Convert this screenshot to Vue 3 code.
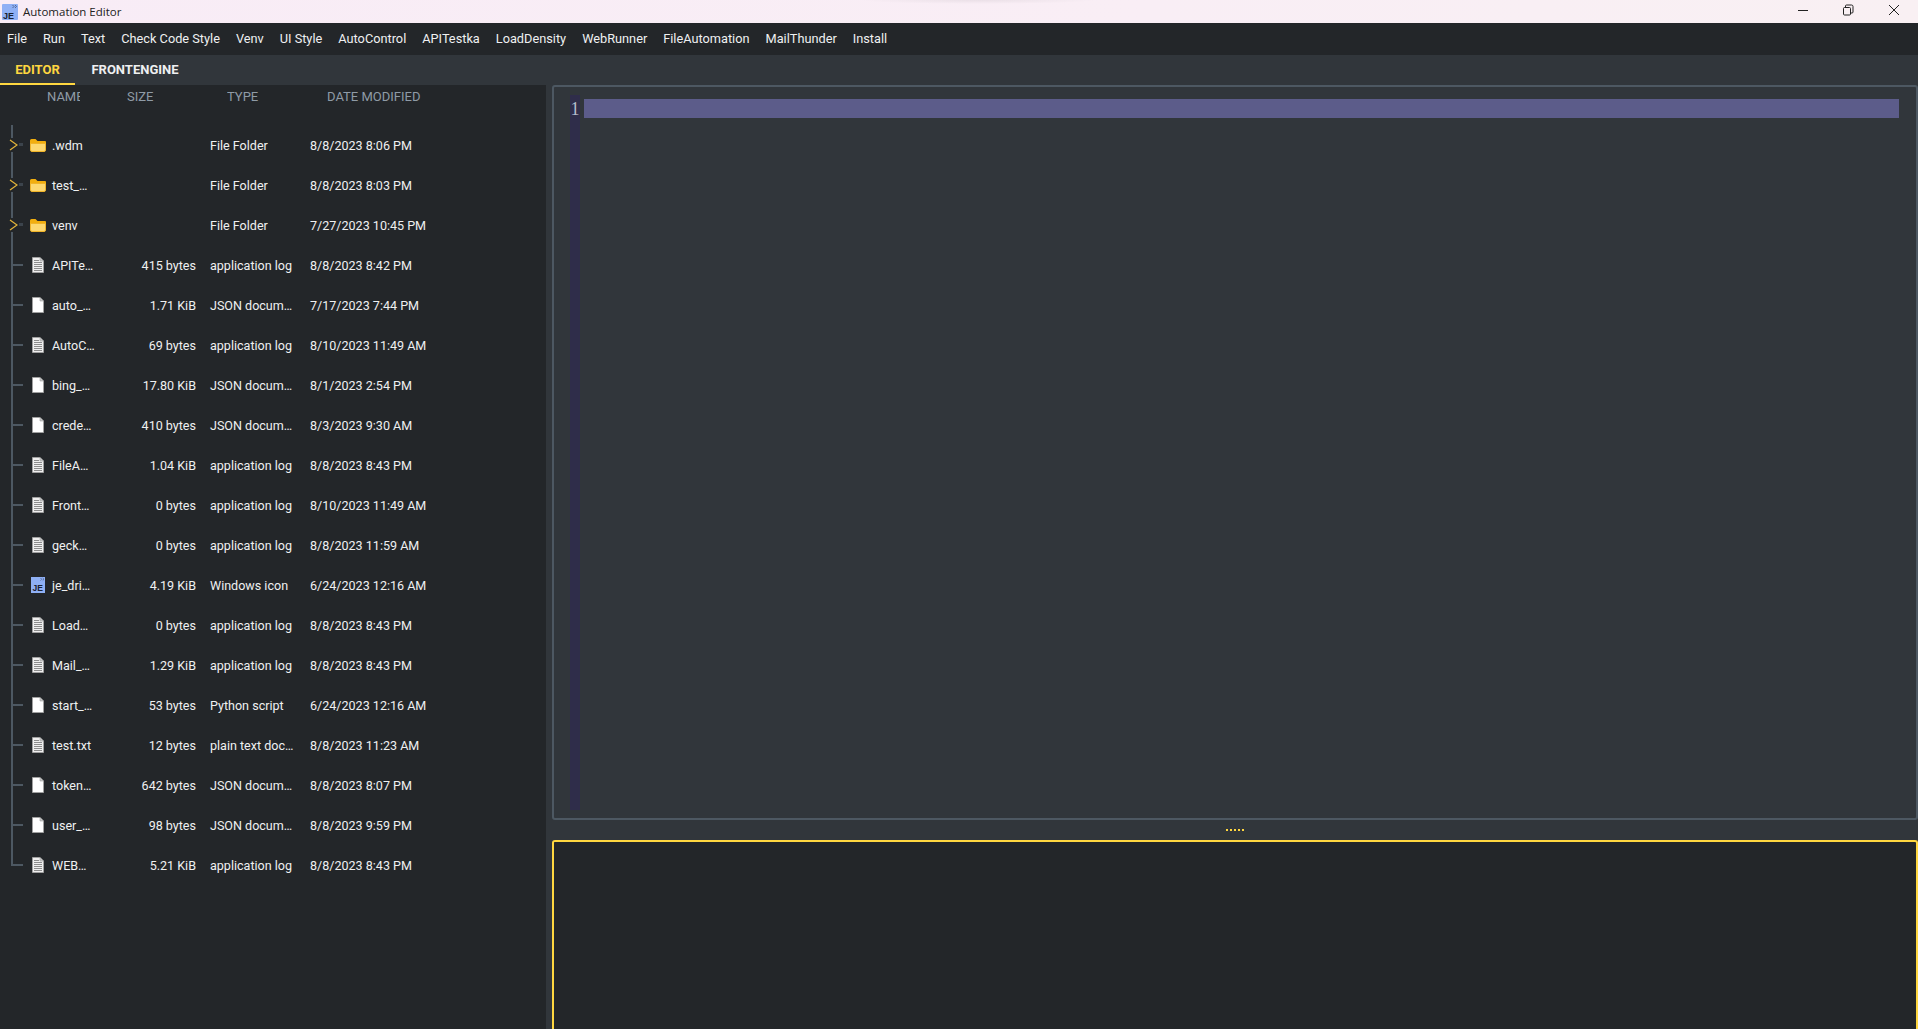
<script setup>
const menus = ['File', 'Run', 'Text', 'Check Code Style', 'Venv', 'UI Style', 'AutoControl', 'APITestka', 'LoadDensity', 'WebRunner', 'FileAutomation', 'MailThunder', 'Install'];

const columns = ['NAME', 'SIZE', 'TYPE', 'DATE MODIFIED'];

const files = [
  { name: '.wdm', size: '', type: 'File Folder', date: '8/8/2023 8:06 PM', icon: 'folder' },
  { name: 'test_…', size: '', type: 'File Folder', date: '8/8/2023 8:03 PM', icon: 'folder' },
  { name: 'venv', size: '', type: 'File Folder', date: '7/27/2023 10:45 PM', icon: 'folder' },
  { name: 'APITe…', size: '415 bytes', type: 'application log', date: '8/8/2023 8:42 PM', icon: 'text' },
  { name: 'auto_…', size: '1.71 KiB', type: 'JSON docum…', date: '7/17/2023 7:44 PM', icon: 'blank' },
  { name: 'AutoC…', size: '69 bytes', type: 'application log', date: '8/10/2023 11:49 AM', icon: 'text' },
  { name: 'bing_…', size: '17.80 KiB', type: 'JSON docum…', date: '8/1/2023 2:54 PM', icon: 'blank' },
  { name: 'crede…', size: '410 bytes', type: 'JSON docum…', date: '8/3/2023 9:30 AM', icon: 'blank' },
  { name: 'FileA…', size: '1.04 KiB', type: 'application log', date: '8/8/2023 8:43 PM', icon: 'text' },
  { name: 'Front…', size: '0 bytes', type: 'application log', date: '8/10/2023 11:49 AM', icon: 'text' },
  { name: 'geck…', size: '0 bytes', type: 'application log', date: '8/8/2023 11:59 AM', icon: 'text' },
  { name: 'je_dri…', size: '4.19 KiB', type: 'Windows icon', date: '6/24/2023 12:16 AM', icon: 'je' },
  { name: 'Load…', size: '0 bytes', type: 'application log', date: '8/8/2023 8:43 PM', icon: 'text' },
  { name: 'Mail_…', size: '1.29 KiB', type: 'application log', date: '8/8/2023 8:43 PM', icon: 'text' },
  { name: 'start_…', size: '53 bytes', type: 'Python script', date: '6/24/2023 12:16 AM', icon: 'blank' },
  { name: 'test.txt', size: '12 bytes', type: 'plain text doc…', date: '8/8/2023 11:23 AM', icon: 'text' },
  { name: 'token…', size: '642 bytes', type: 'JSON docum…', date: '8/8/2023 8:07 PM', icon: 'blank' },
  { name: 'user_…', size: '98 bytes', type: 'JSON docum…', date: '8/8/2023 9:59 PM', icon: 'blank' },
  { name: 'WEB…', size: '5.21 KiB', type: 'application log', date: '8/8/2023 8:43 PM', icon: 'text' }
];
</script>

<template>
  <div class="window">
    <header class="titlebar">
      <svg class="app-icon" viewBox="0 0 16 16" width="16" height="16">
        <rect x="0" y="0" width="16" height="16" rx="1" fill="#8fb0f5" />
        <path d="M10.5 1l1.5 1.5L10.5 4M13 1l1.5 1.5L13 4" stroke="#3c4a6e" stroke-width="0.7" fill="none" />
        <text x="1" y="14.5" class="je-text">JE</text>
      </svg>
      <span class="title-text">Automation Editor</span>
      <div class="win-controls">
        <svg viewBox="0 0 12 12" width="12" height="12"><path d="M2 6.5h10" stroke="#222" stroke-width="1" fill="none" /></svg>
        <svg viewBox="0 0 12 12" width="12" height="12"><rect x="1.5" y="3.5" width="7" height="7.5" rx="1" stroke="#222" fill="none" /><path d="M3.5 3.5V2a1 1 0 0 1 1-1h5A1.5 1.5 0 0 1 11 2.5V8a1 1 0 0 1-1 1H8.5" stroke="#222" fill="none" /></svg>
        <svg viewBox="0 0 12 12" width="12" height="12"><path d="M1 1l10 10M11 1L1 11" stroke="#222" stroke-width="1" fill="none" /></svg>
      </div>
    </header>

    <nav class="menubar">
      <span v-for="m in menus" :key="m" class="menu-item">{{ m }}</span>
    </nav>

    <div class="tabbar">
      <span class="tab active">EDITOR</span>
      <span class="tab">FRONTENGINE</span>
    </div>

    <main class="workspace">
      <section class="tree-panel">
        <div class="tree-head">
          <span v-for="c in columns" :key="c" class="head-cell">{{ c }}</span>
        </div>
        <div class="tree-body">
          <div
            v-for="(f, i) in files"
            :key="f.name"
            class="tree-row"
            :class="{ last: i === files.length - 1, branch: f.icon === 'folder' }"
          >
            <span class="guide">
              <svg v-if="f.icon === 'folder'" class="chevron" viewBox="0 0 9 12" width="9" height="12">
                <path d="M1 1l7 5-7 5" stroke="#e3b53a" stroke-width="1.2" fill="none" />
              </svg>
            </span>
            <span class="icon-cell">
              <svg v-if="f.icon === 'folder'" viewBox="0 0 16 13" width="16" height="13">
                <path d="M0 1.5A1.5 1.5 0 0 1 1.5 0h4l2 2H15a1 1 0 0 1 1 1v2H0z" fill="#f2ae0e" />
                <path d="M0.5 4.5h15V11a1.5 1.5 0 0 1-1.5 1.5H2A1.5 1.5 0 0 1 .5 11z" fill="#fdd870" stroke="#f0b429" stroke-width="1" />
              </svg>
              <svg v-else-if="f.icon === 'je'" class="je-file" viewBox="0 0 14 16" width="14" height="16">
                <rect x="0" y="0" width="14" height="16" fill="#8fb0f5" />
                <path d="M9.5 1l1.3 1.3L9.5 3.6M11.7 1L13 2.3l-1.3 1.3" stroke="#3c4a6e" stroke-width="0.6" fill="none" />
                <text x="1.5" y="14" class="je-text small">JE</text>
              </svg>
              <svg v-else viewBox="0 0 12 16" width="12" height="16" class="doc">
                <path d="M0.5 0.5H8L11.5 4V15.5H0.5z" :fill="f.icon === 'text' ? '#efefef' : '#ffffff'" stroke="#a0a0a0" stroke-width="1" />
                <path d="M8 0.5V4H11.5" fill="#c8c8c8" stroke="#a0a0a0" stroke-width="0.6" />
                <path v-if="f.icon === 'text'" d="M2 3.5H7M2 5.5H10M2 7.5H10M2 9.5H10M2 11.5H10M2 13.5H10" stroke="#8c8c8c" stroke-width="1" fill="none" />
              </svg>
            </span>
            <span class="cell name">{{ f.name }}</span>
            <span class="cell size">{{ f.size }}</span>
            <span class="cell type">{{ f.type }}</span>
            <span class="cell date">{{ f.date }}</span>
          </div>
        </div>
      </section>

      <section class="right-panel">
        <div class="editor">
          <div class="gutter"><span class="line-no">1</span></div>
          <div class="current-line"></div>
        </div>
        <div class="splitter"><i v-for="n in 5" :key="n"></i></div>
        <div class="output"></div>
      </section>
    </main>
  </div>
</template>

<style scoped>
.window {
  width: 1918px;
  height: 1029px;
  display: flex;
  flex-direction: column;
  overflow: hidden;
  background: #31363b;
  color: #eff0f1;
  font-family: Roboto, "Liberation Sans", sans-serif;
  font-size: 12.55px;
}

.titlebar {
  height: 23px;
  flex: none;
  display: flex;
  align-items: center;
  padding-left: 2px;
  background:
    radial-gradient(ellipse 120px 4px at 978px 0, rgba(0, 0, 0, 0.06), transparent),
    linear-gradient(90deg, #f8ecf6, #f9eef5 60%, #f9f0f3);
  color: #222;
}

.app-icon {
  flex: none;
  margin-right: 5px;
}

.je-text {
  font-family: "Liberation Sans", sans-serif;
  font-size: 9px;
  font-weight: 700;
  fill: #1a2233;
}

.je-text.small {
  font-size: 8.5px;
}

.title-text {
  font-family: "Open Sans", sans-serif;
  font-size: 11.5px;
}

.win-controls {
  margin-left: auto;
  margin-bottom: 3px;
  display: flex;
  gap: 34px;
  padding-right: 18px;
}

.menubar {
  height: 32px;
  flex: none;
  box-sizing: border-box;
  padding: 0 0 2px 7px;
  display: flex;
  align-items: center;
  gap: 16px;
  background: #232629;
  font-size: 12.76px;
}

.tabbar {
  height: 30px;
  flex: none;
  display: flex;
  background: #31363b;
}

.tab {
  width: 75px;
  height: 30px;
  box-sizing: border-box;
  display: flex;
  align-items: center;
  justify-content: center;
  border-bottom: 2px solid transparent;
  font-size: 13px;
  font-weight: 700;
}

.tab + .tab {
  width: 120px;
}

.tab.active {
  color: #ffd740;
  border-bottom-color: #ffd740;
}

.workspace {
  flex: 1;
  min-height: 0;
  display: flex;
}

.tree-panel {
  width: 546px;
  flex: none;
  background: #232629;
}

.tree-head {
  height: 40px;
  display: flex;
  padding: 4px 0 0 47px;
  box-sizing: border-box;
  color: #8f9ba6;
  font-size: 13px;
  line-height: 15px;
}

.head-cell {
  width: 100px;
  overflow: hidden;
  white-space: nowrap;
}

.head-cell:first-child {
  width: 33px;
  margin-right: 47px;
}

.head-cell:last-child {
  width: 120px;
}

.tree-row {
  height: 40px;
  display: flex;
  align-items: center;
}

.guide {
  position: relative;
  width: 30px;
  height: 100%;
  flex: none;
}

.guide::before {
  content: "";
  position: absolute;
  left: 11px;
  top: 0;
  bottom: 0;
  width: 2px;
  background: #4d5862;
}

.guide::after {
  content: "";
  position: absolute;
  left: 13px;
  top: 19px;
  width: 10px;
  height: 2px;
  background: #4d5862;
}

/* folder rows: the chevron breaks the line */
.tree-row.branch .guide::before {
  background: linear-gradient(#4d5862 13px, transparent 13px, transparent 27px, #4d5862 27px);
}

.tree-row.branch .guide::after {
  left: 19px;
  width: 4px;
  height: 3px;
  top: 18px;
  background: #3c444c;
}

.tree-row.last .guide::before {
  bottom: 19px;
}

.chevron {
  position: absolute;
  left: 9px;
  top: 14px;
  z-index: 1;
}

.icon-cell {
  width: 22px;
  flex: none;
  display: flex;
  justify-content: flex-start;
  align-items: center;
}

.doc {
  margin-left: 2px;
}

.je-file {
  margin-left: 1px;
}

.cell {
  white-space: nowrap;
}

.name {
  width: 74px;
  flex: none;
}

.size {
  width: 70px;
  flex: none;
  text-align: right;
}

.type {
  width: 100px;
  flex: none;
  margin-left: 14px;
}

.right-panel {
  flex: 1;
  min-width: 0;
  display: flex;
  flex-direction: column;
  padding-left: 6px;
}

.editor {
  height: 735px;
  flex: none;
  box-sizing: border-box;
  display: flex;
  align-items: flex-start;
  border: 2px solid #4d5862;
  border-radius: 3px;
  background: #31363b;
}

.gutter {
  width: 10px;
  height: 715px;
  margin: 8px 0 0 16px;
  flex: none;
  display: flex;
  justify-content: center;
  background: #2f2d4a;
}

.line-no {
  margin-top: 4px;
  height: 20px;
  font-family: "Liberation Serif", serif;
  font-size: 18px;
  line-height: 20px;
  color: #b4bccb;
}

.current-line {
  flex: 1;
  height: 19px;
  margin: 12px 17px 0 4px;
  background: #5c5c8a;
}

.splitter {
  height: 20px;
  flex: none;
  display: flex;
  align-items: center;
  justify-content: center;
  gap: 2px;
}

.splitter i {
  width: 2px;
  height: 2px;
  background: #ffd740;
}

.output {
  flex: 1;
  box-sizing: border-box;
  border: 2px solid #ffd740;
  border-bottom: none;
  border-radius: 3px 3px 0 0;
  background: #232629;
}
</style>

<style>
html, body {
  margin: 0;
  background: #31363b;
}
</style>
